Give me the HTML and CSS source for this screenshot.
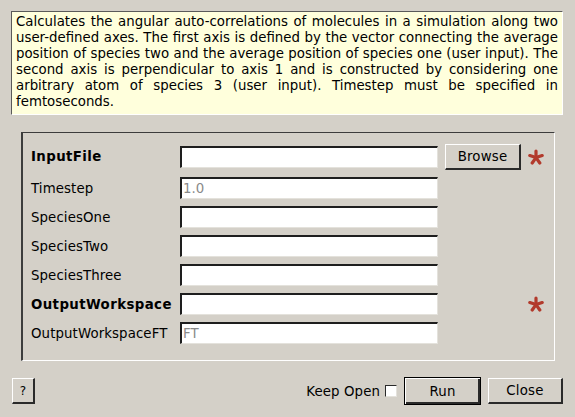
FILE: index.html
```html
<!DOCTYPE html>
<html>
<head>
<meta charset="utf-8">
<link rel="stylesheet" href="styles.css">
</head>
<body>
<div class="dialog">
  <div class="desc">
    <span class="line">Calculates the angular auto-correlations of molecules in a simulation along two</span>
    <span class="line">user-defined axes. The first axis is defined by the vector connecting the average</span>
    <span class="line">position of species two and the average position of species one (user input). The</span>
    <span class="line">second axis is perpendicular to axis 1 and is constructed by considering one</span>
    <span class="line">arbitrary atom of species 3 (user input). Timestep must be specified in</span>
    <span class="line last">femtoseconds.</span>
  </div>

  <div class="group">
    <div class="form">
      <div class="label bold">InputFile</div>
      <div class="field"></div>
      <button class="btn browse">Browse</button>
      <div class="req"><svg viewBox="0 0 16 16" width="16" height="16"><g stroke="#b23a2c" stroke-width="3.2" stroke-linecap="round"><line x1="8" y1="8.6" x2="8" y2="2"/><line x1="8" y1="8.6" x2="1.8" y2="6.6"/><line x1="8" y1="8.6" x2="14.2" y2="6.6"/><line x1="8" y1="8.6" x2="4.2" y2="14"/><line x1="8" y1="8.6" x2="11.8" y2="14"/></g></svg></div>

      <div class="label">Timestep</div>
      <div class="field placeholder">1.0</div>
      <div></div><div></div>

      <div class="label">SpeciesOne</div>
      <div class="field"></div>
      <div></div><div></div>

      <div class="label">SpeciesTwo</div>
      <div class="field"></div>
      <div></div><div></div>

      <div class="label">SpeciesThree</div>
      <div class="field"></div>
      <div></div><div></div>

      <div class="label bold">OutputWorkspace</div>
      <div class="field"></div>
      <div></div>
      <div class="req"><svg viewBox="0 0 16 16" width="16" height="16"><g stroke="#b23a2c" stroke-width="3.2" stroke-linecap="round"><line x1="8" y1="8.6" x2="8" y2="2"/><line x1="8" y1="8.6" x2="1.8" y2="6.6"/><line x1="8" y1="8.6" x2="14.2" y2="6.6"/><line x1="8" y1="8.6" x2="4.2" y2="14"/><line x1="8" y1="8.6" x2="11.8" y2="14"/></g></svg></div>

      <div class="label">OutputWorkspaceFT</div>
      <div class="field placeholder">FT</div>
      <div></div><div></div>
    </div>
  </div>

  <div class="bar">
    <button class="btn help">?</button>
    <div class="spacer"></div>
    <span class="keep">Keep Open</span>
    <span class="check"></span>
    <button class="btn run">Run</button>
    <button class="btn close">Close</button>
  </div>
</div>
</body>
</html>
```

FILE: styles.css
```css
html, body {
  margin: 0;
  padding: 0;
  background: #d4d0c8;
}
body {
  width: 575px;
  height: 417px;
  overflow: hidden;
  font-family: "DejaVu Sans", sans-serif;
  font-size: 13.33px;
  color: #000;
}
.dialog {
  display: flex;
  flex-direction: column;
  padding-top: 11px;
}
.desc {
  margin: 0 12px 0 11px;
  background: #ffffdc;
  border-style: solid;
  border-width: 1px;
  border-color: #5a5a5a #ffffff #ffffff #5a5a5a;
  padding: 2px 4px 0 4px;
  line-height: 16px;
  height: 100px;
}
.line {
  display: block;
  text-align: justify;
  text-align-last: justify;
  white-space: nowrap;
}
.line.last {
  text-align-last: left;
}
.group {
  margin: 17px 20px 0 21px;
  border-style: solid;
  border-width: 1px 1px 1px 2px;
  border-color: #3c3c3c #ffffff #ffffff #3c3c3c;
  padding: 10px 0 16px 8px;
}
.form {
  display: grid;
  grid-template-columns: 142px 258px 76px 16px;
  grid-template-rows: 27px repeat(6, 22px);
  column-gap: 7px;
  row-gap: 7px;
  align-items: center;
}
.label {
  white-space: nowrap;
  letter-spacing: 0.1px;
}
.bold {
  font-weight: bold;
  letter-spacing: 0.4px;
}
.field {
  height: 22px;
  box-sizing: border-box;
  background: #fff;
  border-style: solid;
  border-width: 2px 1px 1px 2px;
  border-color: #1e1e1e #e4e2dc #e4e2dc #1e1e1e;
  padding: 0 0 0 1px;
  line-height: 19px;
}
.placeholder {
  color: #8a8a8a;
}
.btn {
  font-family: "DejaVu Sans", sans-serif;
  font-size: 13.33px;
  color: #000;
  background: #d4d0c8;
  border-style: solid;
  border-width: 1px 2px 2px 1px;
  border-color: #ffffff #2a2a2a #2a2a2a #ffffff;
  padding: 0;
  margin: 0;
  box-sizing: border-box;
  height: 26px;
  letter-spacing: 0.2px;
}
.browse {
  width: 76px;
}
.req {
  display: flex;
  align-items: center;
  justify-content: center;
}
.req svg {
  display: block;
}
.bar {
  display: flex;
  align-items: center;
  height: 28px;
  margin: 16px 12px 0 12px;
}
.help {
  width: 23px;
  font-size: 12px;
}
.spacer {
  flex: 1;
}
.keep {
  white-space: nowrap;
  letter-spacing: 0.1px;
}
.check {
  width: 12px;
  height: 12px;
  box-sizing: border-box;
  background: #fff;
  border-style: solid;
  border-width: 1px;
  border-color: #2a2a2a #e4e2dc #e4e2dc #2a2a2a;
  margin-left: 5px;
  margin-right: 7px;
}
.run {
  width: 77px;
  height: 28px;
  border: 1px solid #000;
  box-shadow: inset 1px 1px 0 #fff, inset -2px -2px 0 #2a2a2a;
}
.close {
  width: 75px;
  margin-left: 7px;
}
```
